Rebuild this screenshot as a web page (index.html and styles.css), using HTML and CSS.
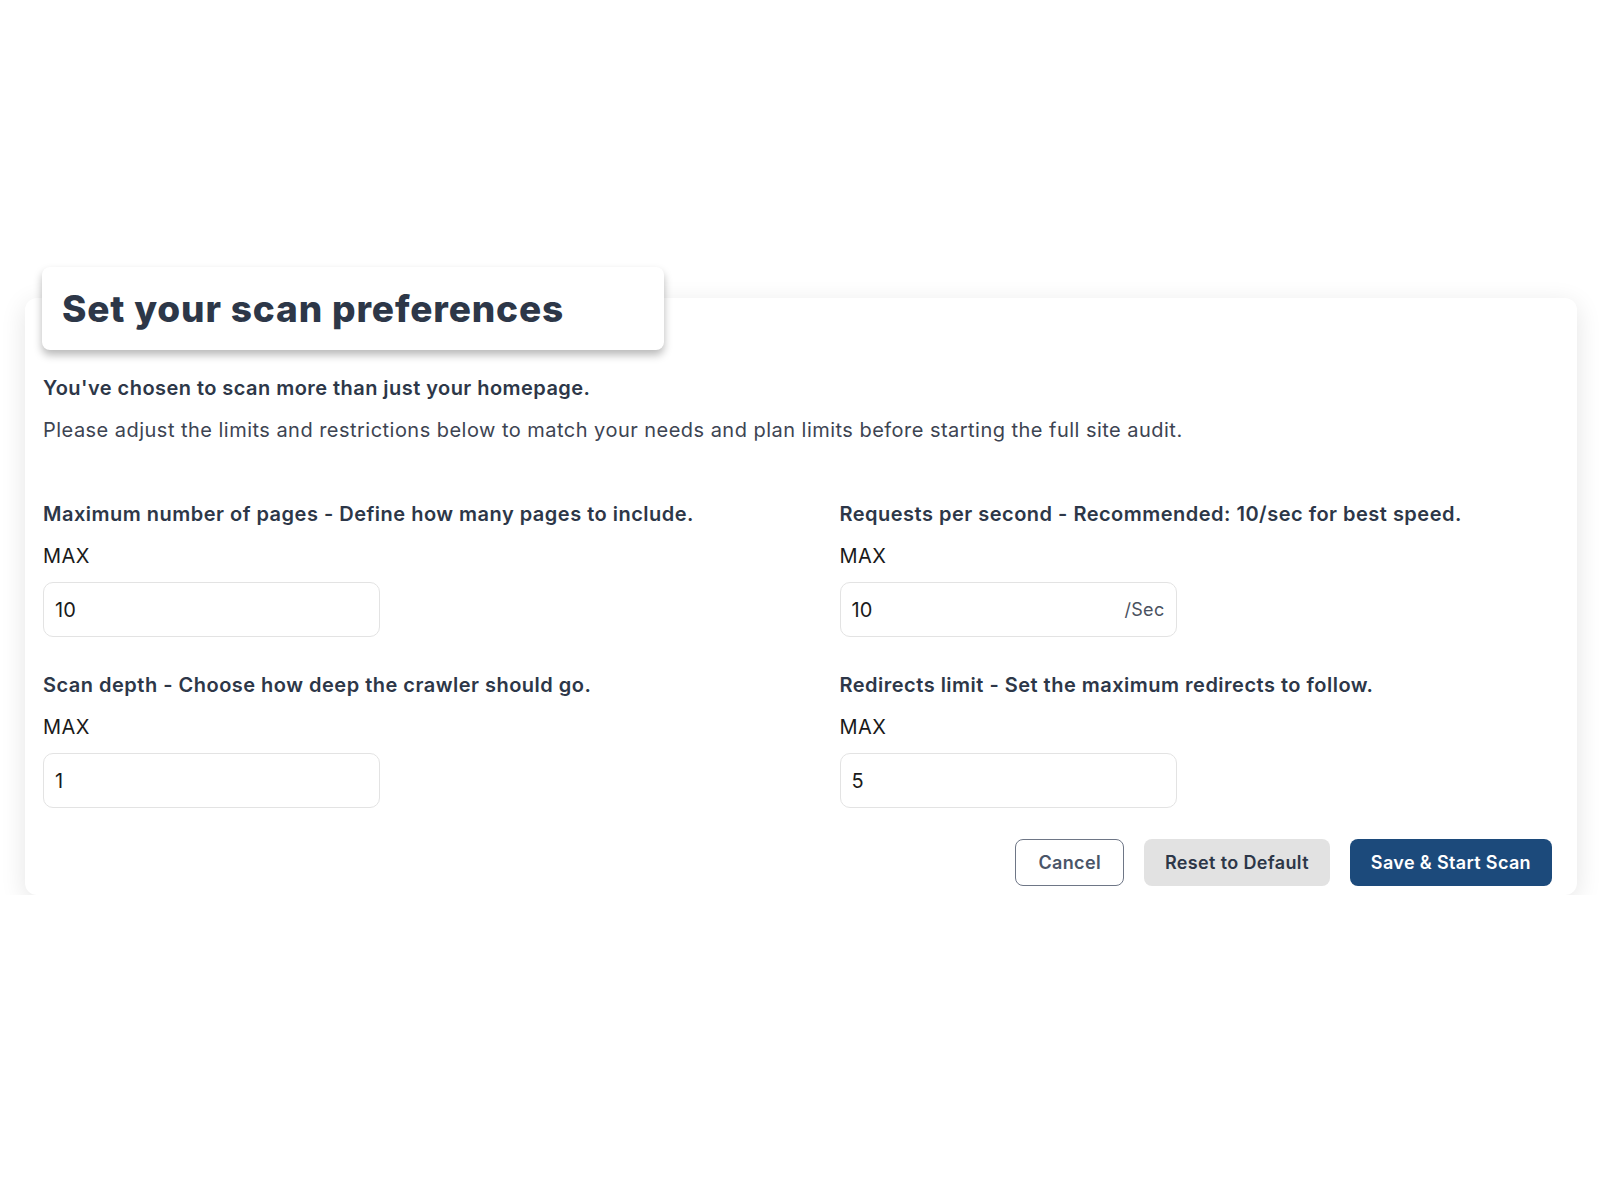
FILE: index.html
```html
<!DOCTYPE html>
<html lang="en">
<head>
<meta charset="utf-8">
<title>Set your scan preferences</title>
<link rel="stylesheet" href="styles.css">
</head>
<body>
<div class="page">
  <div class="card">
    <div class="title-box">
      <h1 class="title">Set your scan preferences</h1>
    </div>
    <p class="intro-strong">You've chosen to scan more than just your homepage.</p>
    <p class="intro">Please adjust the limits and restrictions below to match your needs and plan limits before starting the full site audit.</p>

    <div class="grid">
      <div class="field">
        <div class="label">Maximum number of pages - Define how many pages to include.</div>
        <div class="max">MAX</div>
        <div class="input"><span class="value">10</span></div>
      </div>
      <div class="field">
        <div class="label">Requests per second - Recommended: 10/sec for best speed.</div>
        <div class="max">MAX</div>
        <div class="input"><span class="value">10</span><span class="unit">/Sec</span></div>
      </div>
      <div class="field">
        <div class="label">Scan depth - Choose how deep the crawler should go.</div>
        <div class="max">MAX</div>
        <div class="input"><span class="value">1</span></div>
      </div>
      <div class="field">
        <div class="label">Redirects limit - Set the maximum redirects to follow.</div>
        <div class="max">MAX</div>
        <div class="input"><span class="value">5</span></div>
      </div>
    </div>

    <div class="actions">
      <button class="btn btn-cancel">Cancel</button>
      <button class="btn btn-reset">Reset to Default</button>
      <button class="btn btn-save">Save &amp; Start Scan</button>
    </div>
  </div>
</div>
</body>
</html>
```
FILE: styles.css
```css
* { box-sizing: border-box; }
html, body { margin: 0; padding: 0; background: #ffffff; }
body {
  font-family: Inter, "Noto Sans", "Liberation Sans", sans-serif;
  color: #2d3748;
}
.page {
  padding: 298px 23px 0 25px;
}
.card {
  display: flow-root;
  background: #fff;
  border-radius: 12px;
  box-shadow: 0 6px 26px rgba(0, 0, 0, 0.11);
  padding: 0 25px 9px 17px;
}
.title-box {
  margin-top: -31px;
  width: 622px;
  height: 83px;
  background: #fff;
  border-radius: 8px;
  box-shadow: 0 5px 8px rgba(0, 0, 0, 0.28);
  display: flex;
  align-items: center;
  padding-left: 20px;
}
.title {
  margin: 0;
  font-size: 37px;
  font-weight: 800;
  letter-spacing: 0.85px;
  color: #2d3748;
  line-height: 1;
}
.intro-strong {
  margin: 26px 0 0 1px;
  font-size: 20px;
  line-height: 24px;
  font-weight: 600;
  letter-spacing: 0.45px;
  color: #2d3748;
}
.intro {
  margin: 18px 0 0 1px;
  font-size: 20px;
  line-height: 24px;
  font-weight: 400;
  letter-spacing: 0.47px;
  color: #3d4452;
}
.grid {
  display: grid;
  grid-template-columns: 1fr 1fr;
  column-gap: 84px;
  row-gap: 36px;
  margin-top: 60px;
  padding-left: 1px;
}
.label {
  font-size: 20px;
  line-height: 24px;
  font-weight: 600;
  letter-spacing: 0.49px;
  color: #2d3748;
}
.max {
  margin-top: 18px;
  font-size: 20px;
  line-height: 24px;
  letter-spacing: 0.5px;
  color: #1a1a1a;
}
.input {
  margin-top: 14px;
  width: 337px;
  height: 55px;
  border: 1.5px solid #e3e3e3;
  border-radius: 10px;
  display: flex;
  align-items: center;
  justify-content: space-between;
  padding: 0 11px;
  background: #fff;
}
.value {
  font-size: 20px;
  color: #1a1a1a;
}
.unit {
  font-size: 18px;
  letter-spacing: 0.3px;
  color: #4a5160;
}
.actions {
  display: flex;
  justify-content: flex-end;
  gap: 20px;
  margin-top: 31px;
}
.btn {
  height: 47px;
  border-radius: 8px;
  font-family: Inter, "Noto Sans", "Liberation Sans", sans-serif;
  font-size: 18px;
  font-weight: 600;
  letter-spacing: 0.35px;
  padding: 0 21px;
  border: none;
  cursor: pointer;
}
.btn-cancel {
  background: #fff;
  border: 1.5px solid #6e7686;
  color: #4a5568;
  padding: 0 22px;
}
.btn-reset {
  background: #e2e2e2;
  color: #2d3748;
}
.btn-save {
  background: #1c4a7b;
  color: #fff;
}
```
